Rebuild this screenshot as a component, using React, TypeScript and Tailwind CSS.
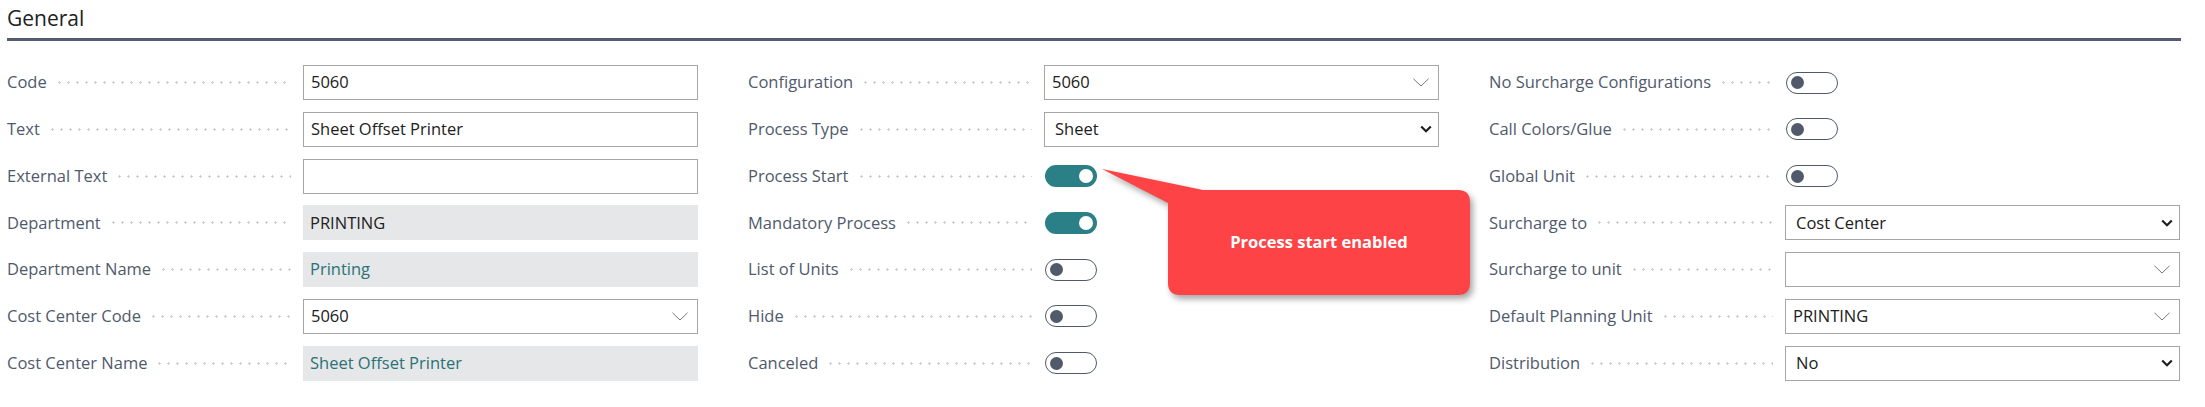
import React from "react";

type Field =
  | { label: string; kind: "text"; value: string }
  | { label: string; kind: "readonly"; value: string; link?: boolean }
  | { label: string; kind: "lookup"; value: string }
  | { label: string; kind: "select"; value: string }
  | { label: string; kind: "toggle"; on: boolean };

const columns: Field[][] = [
  [
    { label: "Code", kind: "text", value: "5060" },
    { label: "Text", kind: "text", value: "Sheet Offset Printer" },
    { label: "External Text", kind: "text", value: "" },
    { label: "Department", kind: "readonly", value: "PRINTING" },
    { label: "Department Name", kind: "readonly", value: "Printing", link: true },
    { label: "Cost Center Code", kind: "lookup", value: "5060" },
    { label: "Cost Center Name", kind: "readonly", value: "Sheet Offset Printer", link: true },
  ],
  [
    { label: "Configuration", kind: "lookup", value: "5060" },
    { label: "Process Type", kind: "select", value: "Sheet" },
    { label: "Process Start", kind: "toggle", on: true },
    { label: "Mandatory Process", kind: "toggle", on: true },
    { label: "List of Units", kind: "toggle", on: false },
    { label: "Hide", kind: "toggle", on: false },
    { label: "Canceled", kind: "toggle", on: false },
  ],
  [
    { label: "No Surcharge Configurations", kind: "toggle", on: false },
    { label: "Call Colors/Glue", kind: "toggle", on: false },
    { label: "Global Unit", kind: "toggle", on: false },
    { label: "Surcharge to", kind: "select", value: "Cost Center" },
    { label: "Surcharge to unit", kind: "lookup", value: "" },
    { label: "Default Planning Unit", kind: "lookup", value: "PRINTING" },
    { label: "Distribution", kind: "select", value: "No" },
  ],
];

function ThinChevron() {
  return (
    <svg width="16" height="9" viewBox="0 0 16 9" className="shrink-0">
      <path d="M0.5 0.8 L8 8 L15.5 0.8" fill="none" stroke="#7a7a7a" strokeWidth="1" />
    </svg>
  );
}

function BoldChevron() {
  return (
    <svg width="12" height="8" viewBox="0 0 12 8" className="shrink-0">
      <path d="M1.2 1.5 L6 6.2 L10.8 1.5" fill="none" stroke="#1f1f1f" strokeWidth="2.2" />
    </svg>
  );
}

function Toggle({ on }: { on: boolean }) {
  if (on) {
    return (
      <div className="w-[52px] h-[22px] rounded-full bg-[#2b7f86] flex items-center justify-end pr-[4px]">
        <div className="w-[14px] h-[14px] rounded-full bg-white" />
      </div>
    );
  }
  return (
    <div className="w-[52px] h-[22px] rounded-full border-[1.5px] border-[#505a6b] bg-white flex items-center pl-[4px]">
      <div className="w-[13px] h-[13px] rounded-full bg-[#505a6b]" />
    </div>
  );
}

function Control({ field }: { field: Field }) {
  switch (field.kind) {
    case "text":
      return (
        <div className="h-[35px] border border-[#a6a6a6] bg-white flex items-center px-[7px] text-[#212121]">
          {field.value}
        </div>
      );
    case "readonly":
      return (
        <div
          className={`h-[35px] bg-[#e6e7e9] flex items-center px-[7px] ${
            field.link ? "text-[#2a7275]" : "text-[#212121]"
          }`}
        >
          {field.value}
        </div>
      );
    case "lookup":
      return (
        <div className="h-[35px] border border-[#a6a6a6] bg-white flex items-center justify-between pl-[7px] pr-[9px] text-[#212121]">
          <span>{field.value}</span>
          <ThinChevron />
        </div>
      );
    case "select":
      return (
        <div className="h-[35px] border border-[#a6a6a6] bg-white flex items-center justify-between pl-[10px] pr-[6px] text-[#212121]">
          <span>{field.value}</span>
          <BoldChevron />
        </div>
      );
    case "toggle":
      return (
        <div className="h-[35px] flex items-center pl-px">
          <Toggle on={field.on} />
        </div>
      );
  }
}

function Row({ field }: { field: Field }) {
  return (
    <div className="grid grid-cols-[296px_395px] items-center h-[35px]">
      <div className="flex items-center min-w-0">
        <span className="text-[#4f5a6c] whitespace-nowrap">{field.label}</span>
        <span className="flex-1 h-[3px] ml-[8px] mr-[12px] bg-[radial-gradient(circle,#c4c4c4_0.9px,transparent_1.3px)] bg-[length:9px_3px] bg-repeat-x" />
      </div>
      <Control field={field} />
    </div>
  );
}

export default function App() {
  return (
    <div className="relative w-full h-[407px] bg-white font-['Open_Sans','Noto_Sans',sans-serif] text-[16.5px] leading-none overflow-hidden">
      <div className="pl-[7px] pr-[24px]">
        <div className="h-[38px] flex items-center pb-[2px]">
          <h2 className="text-[21px] text-[#212121]">General</h2>
        </div>
        <div className="h-[3px] bg-[#535d6f]" />
        <div className="flex gap-[50px] mt-[24px]">
          {columns.map((col, i) => (
            <div key={i} className="w-[691px] flex flex-col gap-[11.8px]">
              {col.map((f) => (
                <Row key={f.label} field={f} />
              ))}
            </div>
          ))}
        </div>
      </div>

      {/* callout over the Process Start toggle */}
      <svg
        className="absolute left-[1090px] top-[160px] drop-shadow-[3px_4px_3px_rgba(0,0,0,0.35)]"
        width="400"
        height="150"
        viewBox="0 0 400 150"
      >
        <path
          d="M12 9 L113 30 L368 30 Q380 30 380 42 L380 123 Q380 135 368 135 L90 135 Q78 135 78 123 L78 43 Z"
          fill="#fd4346"
        />
      </svg>
      <div className="absolute left-[1168px] top-[190px] w-[302px] h-[105px] flex items-center justify-center text-white font-bold text-[16.5px]">
        Process start enabled
      </div>
    </div>
  );
}
